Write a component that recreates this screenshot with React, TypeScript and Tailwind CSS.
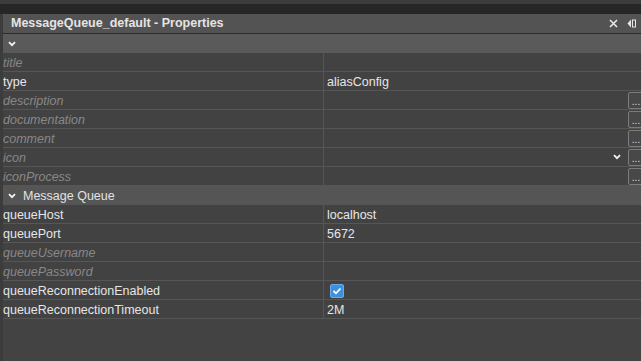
import React from "react";

type Row = {
  label: string;
  value?: string;
  dim?: boolean;
  dots?: boolean;
  select?: boolean;
  check?: boolean;
};

const general: Row[] = [
  { label: "title", dim: true },
  { label: "type", value: "aliasConfig" },
  { label: "description", dim: true, dots: true },
  { label: "documentation", dim: true, dots: true },
  { label: "comment", dim: true, dots: true },
  { label: "icon", dim: true, dots: true, select: true },
  { label: "iconProcess", dim: true, dots: true },
];

const mq: Row[] = [
  { label: "queueHost", value: "localhost" },
  { label: "queuePort", value: "5672" },
  { label: "queueUsername", dim: true },
  { label: "queuePassword", dim: true },
  { label: "queueReconnectionEnabled", check: true },
  { label: "queueReconnectionTimeout", value: "2M" },
];

function Chevron({ className = "" }: { className?: string }) {
  return (
    <svg width="8" height="6" viewBox="0 0 8 6" className={className}>
      <path d="M1 1.2 L4 4.2 L7 1.2" stroke="#f2f2f2" strokeWidth="1.8" fill="none" />
    </svg>
  );
}

function PropRow({ r }: { r: Row }) {
  return (
    <div className="flex h-[19px] border-b border-[#565656] bg-[#424242]">
      <div
        className={`w-[320px] shrink-0 pt-[1px] leading-[18px] whitespace-nowrap ${
          r.dim ? "italic text-[#888888]" : "text-[#e6e6e6]"
        }`}
      >
        {r.label}
      </div>
      <div className="flex flex-1 items-center border-l border-[#565656] pl-[3px]">
        {r.value && <span className="pt-[1px] leading-[18px] text-[#e6e6e6]">{r.value}</span>}
        {r.check && (
          <div className="ml-[3px] mt-[1px] flex h-[14px] w-[14px] items-center justify-center rounded-[2px] bg-[#3f90dc] border border-[#6aaae8]">
            <svg width="10" height="8" viewBox="0 0 10 8">
              <path d="M1.5 4 L4 6.3 L8.5 1.5" stroke="#ffffff" strokeWidth="1.8" fill="none" />
            </svg>
          </div>
        )}
        <div className="flex-1" />
        {r.select && <Chevron className="mr-[7px]" />}
        {r.dots && (
          <div className="mr-[-3px] flex h-[17px] w-[16px] items-end justify-center rounded-[2px] border border-[#7c7c7c] bg-[#484848] pb-[1px] text-[10px] leading-[10px] text-[#dddddd]">
            ...
          </div>
        )}
      </div>
    </div>
  );
}

export default function App() {
  return (
    <div
      className="flex h-[361px] w-[641px] flex-col overflow-hidden bg-[#434343] text-[12.5px]"
      style={{ fontFamily: '"Liberation Sans", Arial, sans-serif' }}
    >
      <div className="h-[4px] shrink-0 bg-[#3c3c3c]" />
      <div className="h-[10px] shrink-0 bg-[#262626]" />
      <div className="flex flex-1 flex-col border-l-[3px] border-[#3c3c3c]">
        <div className="flex h-[20px] shrink-0 items-center border-b border-[#2c2c2c] bg-[#535353] pl-[8px]">
          <span className="text-[12.5px] font-bold text-[#e4e4e4]">MessageQueue_default - Properties</span>
          <div className="flex-1" />
          <svg width="9" height="9" viewBox="0 0 9 9" className="mr-[9px]">
            <path d="M1 1 L8 8 M8 1 L1 8" stroke="#e8e8e8" strokeWidth="1.6" />
          </svg>
          <svg width="9" height="9" viewBox="0 0 9 9" className="mr-[5px]">
            <path d="M4 0.5 L0.5 4.5 L4 8.5 Z" fill="#e8e8e8" />
            <rect x="5.5" y="1" width="3" height="7" stroke="#e8e8e8" strokeWidth="1" fill="none" />
          </svg>
        </div>
        <div className="flex h-[19px] shrink-0 items-center bg-[#5a5a5a] pl-[5px]">
          <Chevron />
        </div>
        {general.map((r) => (
          <PropRow key={r.label} r={r} />
        ))}
        <div className="flex h-[19px] shrink-0 items-center bg-[#555555] pl-[5px]">
          <Chevron />
          <span className="ml-[7px] pt-[1px] text-[#e2e2e2] leading-[18px]">Message Queue</span>
        </div>
        {mq.map((r) => (
          <PropRow key={r.label} r={r} />
        ))}
      </div>
    </div>
  );
}
